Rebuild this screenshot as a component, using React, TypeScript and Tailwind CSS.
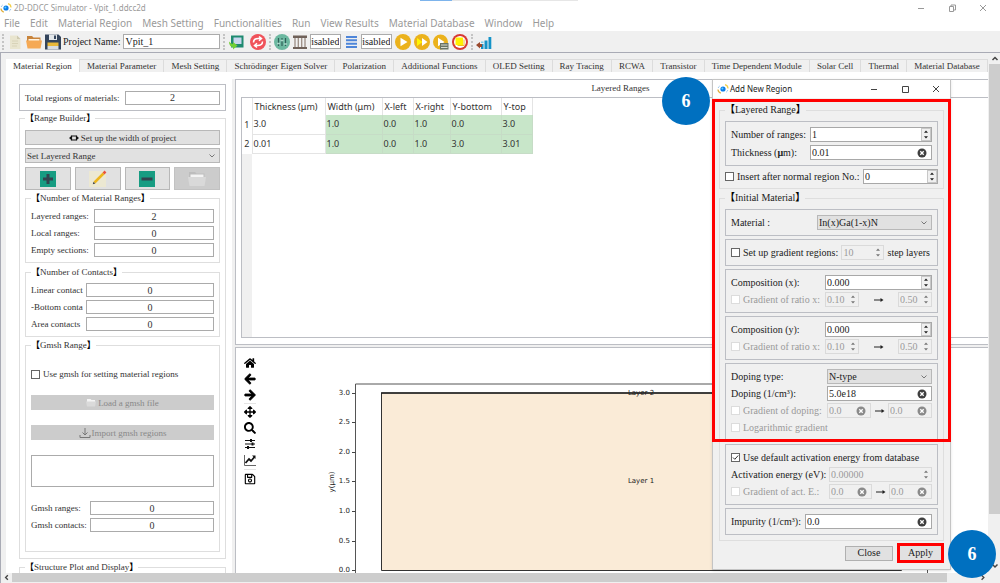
import { useId } from 'react';
import type { ReactNode } from 'react';
import { FaArrowLeft, FaArrowRight, FaArrowsAlt, FaHome, FaRegSave, FaSearch } from 'react-icons/fa';

const MENUS = ['File', 'Edit', 'Material Region', 'Mesh Setting', 'Functionalities', 'Run', 'View Results', 'Material Database', 'Window', 'Help'];

const TABS = [
    'Material Region',
    'Material Parameter',
    'Mesh Setting',
    'Schrödinger Eigen Solver',
    'Polarization',
    'Additional Functions',
    'OLED Setting',
    'Ray Tracing',
    'RCWA',
    'Transistor',
    'Time Dependent Module',
    'Solar Cell',
    'Thermal',
    'Material Database',
];

const COLUMNS = ['Thickness (μm)', 'Width (μm)', 'X-left', 'X-right', 'Y-bottom', 'Y-top'];

const LAYERS = [
    ['3.0', '1.0', '0.0', '1.0', '0.0', '3.0'],
    ['0.01', '1.0', '0.0', '1.0', '3.0', '3.01'],
];

const Y_TICKS = [
    { label: '3.0', y: 393 },
    { label: '2.5', y: 422 },
    { label: '2.0', y: 452 },
    { label: '1.5', y: 481 },
    { label: '1.0', y: 511 },
    { label: '0.5', y: 541 },
    { label: '0.0', y: 570 },
];

function AppLogo() {
    return (
        <svg viewBox="0 0 12 12" className="h-3 w-3 shrink-0">
            <circle cx="6" cy="6" r="2.6" fill="#0a7be8" />
            <circle cx="5.4" cy="5.4" r="1" fill="#5fd0ff" />
            <path d="M1 6.500c0 1.800 1 3 2.800 3.600" fill="none" stroke="#e0b040" strokeWidth="1.200" />
            <path d="M1.200 5c.3-1 .8-1.600 1.500-2" fill="none" stroke="#9cc8ee" strokeWidth="1" />
            <path d="M8 1.600c1.800.5 3 2 3 4" fill="none" stroke="#f3cf45" strokeWidth="1.200" />
            <path d="M10.800 7c-.3 1-.8 1.700-1.600 2.200" fill="none" stroke="#9cc8ee" strokeWidth="1" />
        </svg>
    );
}

function WindowButtons({ restore = false }: { restore?: boolean }) {
    return (
        <div className={['flex gap-[21px]', restore ? 'text-[#999]' : 'text-[#444]'].join(' ')}>
            <button aria-label="Minimize">
                <svg viewBox="0 0 10 10" className="h-[10px] w-[10px]" fill="none" stroke="currentColor">
                    <path d="M2 5.500h6" />
                </svg>
            </button>
            <button aria-label="Maximize">
                <svg viewBox="0 0 10 10" className="h-[10px] w-[10px]" fill="none" stroke="currentColor">
                    {restore ? <path d="M2.500 3.500h4v5h-4zM4 3.500v-1.500h4.500v5h-2" /> : <path d="M2.500 2.500h6v6h-6z" />}
                </svg>
            </button>
            <button aria-label="Close window">
                <svg viewBox="0 0 10 10" className="h-[10px] w-[10px]" fill="none" stroke="currentColor">
                    <path d="M2 2l6 6M8 2l-6 6" />
                </svg>
            </button>
        </div>
    );
}

function Handle() {
    return <span className="h-4 w-0 shrink-0 border-l-2 border-dotted border-[#c4c4c4]" />;
}

function Group({ title, className = '', children }: { title: string; className?: string; children?: ReactNode }) {
    return (
        <fieldset className={['min-w-0 border border-[#dedede] px-[5px]', className].join(' ')}>
            <legend className="h-3 leading-3">
                <b className="text-black">【</b>
                {title}
                <b className="text-black">】</b>
            </legend>
            {children}
        </fieldset>
    );
}

function Chevron() {
    return (
        <svg viewBox="0 0 8 8" className="pointer-events-none absolute top-1 right-1 h-2 w-2" fill="none" stroke="#777">
            <path d="M1.500 2.500l2.500 2.500l2.500-2.500" />
        </svg>
    );
}

function Combo({ label, value, className = '' }: { label: string; value: string; className?: string }) {
    return (
        <div className={['relative h-[15px]', className].join(' ')}>
            <select aria-label={label} className="block h-full w-full appearance-none border border-[#b8b8b8] bg-[#e1e1e1] px-px leading-3">
                <option>{value}</option>
            </select>
            <Chevron />
        </div>
    );
}

interface FieldProps {
    id?: string;
    label?: string;
    value: string;
    kind?: 'spin' | 'clear';
    disabled?: boolean;
    className?: string;
}

// Text box with either stepper arrows or a clear button at its right end
function Field({ id, label, value, kind = 'spin', disabled = false, className = '' }: FieldProps) {
    return (
        <div
            className={[
                'flex h-[15px] min-w-0 items-center border',
                disabled ? 'border-[#dadada] bg-[#f0f0f0] text-[#9a9a9a]' : 'border-[#a8a8a8] bg-white',
                className,
            ].join(' ')}
        >
            <input id={id} aria-label={label} defaultValue={value} disabled={disabled} className="h-full w-0 min-w-0 flex-1 pl-px" />
            {kind === 'spin' ? (
                <button
                    aria-label="Step value"
                    disabled={disabled}
                    className={['flex h-full w-[10px] shrink-0 items-center justify-center', disabled ? '' : 'border border-[#c8c8c8] bg-[#f0f0f0]'].join(' ')}
                >
                    <svg viewBox="0 0 6 11" className="h-[11px] w-[6px]" fill={disabled ? '#777' : '#222'}>
                        <path d="M3 1.500l2 2.200h-4zM3 9.500l2-2.200h-4z" />
                    </svg>
                </button>
            ) : (
                <button aria-label="Clear" disabled={disabled} className="mr-1 shrink-0">
                    <svg viewBox="0 0 10 10" className="h-[10px] w-[10px]">
                        <circle cx="5" cy="5" r="4.500" fill={disabled ? '#8a8a8a' : '#3f3f3f'} />
                        <path d="M3.300 3.300l3.400 3.400M6.700 3.300l-3.400 3.400" stroke="#fff" strokeWidth="1.300" />
                    </svg>
                </button>
            )}
        </div>
    );
}

function Check({ label, checked = false, disabled = false }: { label: string; checked?: boolean; disabled?: boolean }) {
    return (
        <label className={['flex shrink-0 items-center gap-[3px] whitespace-nowrap', disabled ? 'text-[#9a9a9a]' : ''].join(' ')}>
            <span className="relative flex">
                <input
                    type="checkbox"
                    defaultChecked={checked}
                    disabled={disabled}
                    className="peer h-[9px] w-[9px] appearance-none border border-[#666] bg-white disabled:border-[#dcdcdc]"
                />
                <svg
                    viewBox="0 0 9 9"
                    className="pointer-events-none absolute inset-0 hidden h-[9px] w-[9px] peer-checked:block"
                    fill="none"
                    stroke="#333"
                >
                    <path d="M2 4.500l1.800 1.800l3.400-3.800" />
                </svg>
            </span>
            {label}
        </label>
    );
}

function Frame({ children }: { children: ReactNode }) {
    return <div className="flex flex-col gap-[2px] border border-[#bcbec4] p-[5px]">{children}</div>;
}

function Row({ children }: { children: ReactNode }) {
    return <div className="flex h-[15px] items-center justify-between">{children}</div>;
}

function LabelledField({ label, ...field }: Omit<FieldProps, 'label'> & { label: ReactNode }) {
    const id = useId();
    return (
        <Row>
            <label htmlFor={id}>{label}</label>
            <Field id={id} {...field} />
        </Row>
    );
}

function Counter({ label, value, className }: { label: string; value: string; className: string }) {
    const id = useId();
    return (
        <div className="flex h-[14px] items-center justify-between">
            <label htmlFor={id} className="min-w-0 flex-1 overflow-hidden whitespace-nowrap">
                {label}
            </label>
            <input
                id={id}
                readOnly
                value={value}
                className={['h-full border border-[#ababab] bg-white text-center text-[10px]', className].join(' ')}
            />
        </div>
    );
}

function Arrow() {
    return (
        <svg viewBox="0 0 10 6" className="h-[6px] w-[10px] shrink-0" stroke="#222" fill="#222">
            <path d="M0 3h7" fill="none" />
            <path d="M6.500 1l3 2l-3 2z" stroke="none" />
        </svg>
    );
}

function ToolButton({ label, children }: { label: string; children: ReactNode }) {
    return (
        <button aria-label={label} className="shrink-0">
            <svg viewBox="0 0 16 16" className="h-4 w-4">
                {children}
            </svg>
        </button>
    );
}

function Toolbar() {
    return (
        <div className="flex h-[21px] shrink-0 items-center gap-[3px] bg-[#f0f0f0] pl-[2px] text-[10px]">
            <Handle />
            <ToolButton label="New project">
                <path d="M3 1.500h7l3.500 3.500v10h-10.500z" fill="#e9e5cf" />
                <path d="M10 1.500v3.500h3.500z" fill="#cfcab0" />
                <path d="M5 7h6M5 9.500h6M5 12h5" stroke="#d8d3b8" />
            </ToolButton>
            <ToolButton label="Open project">
                <path d="M1 2h5l1.500 1.500h7v4h-13.500z" fill="#c8843c" />
                <path d="M2.500 5h11v3h-11z" fill="#fff3e0" />
                <path d="M0 6.500h16l-1.500 8h-13z" fill="#f5a955" />
            </ToolButton>
            <ToolButton label="Save project">
                <path d="M0 .5h13.500l2.500 2.500v12.500h-16z" fill="#34455c" />
                <path d="M4 .5h8v5.500h-8z" fill="#e3e7ea" />
                <path d="M9 1.500h2v3.500h-2z" fill="#34455c" />
                <path d="M2.500 8.500h11v3.500h-11z" fill="#e9b93a" />
                <path d="M2.500 12h11v3.500h-11z" fill="#d9dde0" />
            </ToolButton>
            <label htmlFor="project-name" className="-ml-[1px] whitespace-nowrap">
                Project Name:
            </label>
            <input id="project-name" defaultValue="Vpit_1" className="h-[15px] w-[97px] border border-[#ababab] bg-white pl-[1px]" />
            <Handle />
            <ToolButton label="Import structure">
                <path d="M3 1.500h12.500v12h-12.500z" fill="#1f8a70" />
                <path d="M5.500 3.500h8v6.500h-8z" fill="#c9d6ee" />
                <path d="M1 7.500c0 3.500 1.500 5.500 4 5.500v2.500l4.500-4l-4.500-3.500v2c-1.500 0-2.500-1-4-2.500z" fill="#72cf35" />
            </ToolButton>
            <div className="w-0" />
            <ToolButton label="Reload">
                <circle cx="8" cy="8" r="8" fill="#f0525a" />
                <g fill="none" stroke="#fff" strokeWidth="1.500">
                    <path d="M3.500 8.500c0-3 2.500-4 5-4h2M9 2.500l2.500 2l-2.500 2.200" />
                    <path d="M12.500 7.500c0 3-2.500 4-5 4h-2M7 13.500l-2.500-2l2.500-2.200" />
                </g>
            </ToolButton>
            <Handle />
            <div className="flex items-center gap-[2px]">
                <ToolButton label="Solver settings">
                    <circle cx="8" cy="8" r="8" fill="#6cb8a0" />
                    <path d="M4.500 4v8M8 4v8M11.500 4v8" stroke="#2f5f58" strokeWidth="1.200" />
                    <path d="M3 9.500h3M6.500 6.500h3M10 10h3" stroke="#a9d8c9" strokeWidth="1.500" />
                </ToolButton>
                <ToolButton label="Layers">
                    <path d="M1 1.500h14v2.500h-14zM1 13h14v2h-14z" fill="#6f6159" />
                    <path d="M3 4v9M6.300 4v9M9.700 4v9M13 4v9" stroke="#9b8d84" strokeWidth="1.300" />
                </ToolButton>
                <input aria-label="Layer mode" dir="rtl" readOnly value="Disabled" className="h-[15px] w-[31px] border border-[#ababab] bg-white pr-[1px]" />
                <ToolButton label="Mesh rows">
                    <path d="M3 3h11M3 6.300h11M3 9.700h11M3 13h11" stroke="#4f86d9" strokeWidth="2" />
                </ToolButton>
                <input aria-label="Row mode" dir="rtl" readOnly value="Disabled" className="h-[15px] w-[31px] border border-[#ababab] bg-white pr-[1px]" />
            </div>
            <ToolButton label="Run">
                <circle cx="8" cy="8" r="8" fill="#ebb21c" />
                <path d="M5.500 3.800l7 4.200l-7 4.200z" fill="#fff" />
            </ToolButton>
            <ToolButton label="Run all">
                <circle cx="8" cy="8" r="8" fill="#ebb21c" />
                <path d="M3 4l5.500 4l-5.500 4z" fill="#fff700" />
                <path d="M8 4l5.500 4l-5.500 4z" fill="#fff" />
            </ToolButton>
            <ToolButton label="Run on server">
                <circle cx="7.500" cy="8" r="7.500" fill="#ebb21c" />
                <path d="M5 3.800l6.500 4.200l-6.500 4.200z" fill="#fff" />
                <path d="M7 9h8.500v6.500h-8.500z" fill="#6a7466" />
                <path d="M8 11h6.500M8 13.500h6.500" stroke="#d8dccf" />
            </ToolButton>
            <ToolButton label="Stop">
                <circle cx="8" cy="8" r="8" fill="#d83a34" />
                <circle cx="8" cy="8" r="6" fill="#fff" />
                <path d="M3.500 3.500h7.500v7.500h-7.500z" fill="#fff000" />
                <path d="M5.500 11.500h6.500v-6" fill="none" stroke="#f0c020" />
            </ToolButton>
            <Handle />
            <ToolButton label="Charts">
                <path d="M5 10h2.500v5h-2.500zM8.500 6.500h3v8.500h-3zM12.500 3h2.800v12h-2.800z" fill="#1493c8" />
                <path d="M5 7.500h2.500v1.500h-2.500z" fill="#7ccdea" />
                <path d="M0 11l4-3v2h2v3h-2v1.500z" fill="#9b4a2e" />
            </ToolButton>
        </div>
    );
}

function RegionSidebar() {
    return (
        <aside className="flex w-[226px] shrink-0 flex-col overflow-hidden pt-3 pr-[6px] pl-[13px] text-[9px] leading-3 text-[#333]">
            <div className="mb-[1px] flex h-[27px] shrink-0 items-center justify-between border border-[#bcbec4] px-[5px]">
                <label htmlFor="total-regions">Total regions of materials:</label>
                <input id="total-regions" readOnly value="2" className="h-[14px] w-[95px] border border-[#ababab] bg-white text-center text-[10px]" />
            </div>

            <Group title="Range Builder" className="shrink-0 pt-[6px] pb-[6px]">
                <button className="flex h-[15px] w-full items-center justify-center gap-[2px] border border-[#b8b8b8] bg-[#e1e1e1]">
                    <svg viewBox="0 0 10 8" className="h-2 w-[10px]" fill="#111">
                        <path d="M0 4l3-2.500v5zM10 4l-3-2.500v5z" />
                        <path d="M2.500 2h5v4h-5z" fill="none" stroke="#111" strokeWidth="1.200" />
                    </svg>
                    Set up the width of project
                </button>
                <Combo label="Range type" value="Set Layered Range" className="mt-[3px]" />
                <div className="mt-1 grid grid-cols-4 gap-1">
                    <button aria-label="Add range" className="flex h-[23px] items-center justify-center border border-[#b8b8b8] bg-[#e1e1e1]">
                        <svg viewBox="0 0 16 16" className="h-4 w-4">
                            <path d="M0 0h16v16h-16z" fill="#179c82" />
                            <path d="M8 3v10M3 8h10" stroke="#33434e" strokeWidth="3" />
                        </svg>
                    </button>
                    <button aria-label="Edit range" className="flex h-[23px] items-center justify-center border border-[#b8b8b8] bg-[#e1e1e1]">
                        <svg viewBox="0 0 18 18" className="h-[18px] w-[18px]">
                            <path d="M0 1h17v16h-17z" fill="#ece8d2" />
                            <path d="M5.500 12.500l9-9" stroke="#edb51c" strokeWidth="2.500" />
                            <path d="M14.500 3.500l2-2" stroke="#e8523f" strokeWidth="2.500" />
                            <path d="M3.800 14.200l2.500-.8l-1.700-1.700z" fill="#444" />
                        </svg>
                    </button>
                    <button aria-label="Remove range" className="flex h-[23px] items-center justify-center border border-[#b8b8b8] bg-[#e1e1e1]">
                        <svg viewBox="0 0 16 16" className="h-4 w-4">
                            <path d="M0 0h16v16h-16z" fill="#179c82" />
                            <path d="M2.500 8h11" stroke="#33434e" strokeWidth="3" />
                        </svg>
                    </button>
                    <button aria-label="Open range" disabled className="flex h-[23px] items-center justify-center border border-[#c2c2c2] bg-[#cccccc]">
                        <svg viewBox="0 0 18 16" className="h-4 w-[18px]">
                            <path d="M1 1h6l1.500 1.500h8v4h-15.500z" fill="#bdbdbd" />
                            <path d="M2.500 3.500h13v3h-13z" fill="#f4f4f4" />
                            <path d="M0 6h18l-1.500 9h-15z" fill="#d9d9d9" />
                        </svg>
                    </button>
                </div>

                <Group title="Number of Material Ranges" className="mt-[2px] pt-[5px] pb-[5px]">
                    <div className="flex flex-col gap-[3px]">
                        <Counter label="Layered ranges:" value="2" className="w-[120px]" />
                        <Counter label="Local ranges:" value="0" className="w-[120px]" />
                        <Counter label="Empty sections:" value="0" className="w-[120px]" />
                    </div>
                </Group>

                <Group title="Number of Contacts" className="mt-[3px] pt-[5px] pb-[5px]">
                    <div className="flex flex-col gap-[3px]">
                        <Counter label="Linear contact" value="0" className="w-[128px]" />
                        <Counter label="-Bottom conta" value="0" className="w-[128px]" />
                        <Counter label="Area contacts" value="0" className="w-[128px]" />
                    </div>
                </Group>

                <Group title="Gmsh Range" className="mt-[2px] pt-[17px] pb-[19px]">
                    <Check label="Use gmsh for setting material regions" />
                    <button disabled className="mt-[15px] flex h-[15px] w-full items-center justify-center gap-[2px] bg-[#cccccc] text-[#888]">
                        <svg viewBox="0 0 10 9" className="h-[9px] w-[10px]">
                            <path d="M1 1h3.500l1 1h3.500v2h-8z" fill="#f4f4f4" />
                            <path d="M0 3.500h10l-1 5h-8z" fill="#dadada" />
                        </svg>
                        Load a gmsh file
                    </button>
                    <button disabled className="mt-[15px] flex h-[15px] w-full items-center justify-center gap-[1px] bg-[#cccccc] text-[#888]">
                        <svg viewBox="0 0 12 12" className="h-3 w-3" fill="none" stroke="#777">
                            <path d="M6 1v7M3.500 5.500l2.500 2.500l2.500-2.500M1 8v2.500h10v-2.500" />
                        </svg>
                        Import gmsh regions
                    </button>
                    <textarea aria-label="Gmsh regions" className="mt-[15px] block h-8 w-full resize-none border border-[#ababab] bg-white" />
                    <div className="mt-[14px] flex flex-col gap-[3px]">
                        <Counter label="Gmsh ranges:" value="0" className="w-[124px]" />
                        <Counter label="Gmsh contacts:" value="0" className="w-[124px]" />
                    </div>
                </Group>
            </Group>

            <Group title="Structure Plot and Display" className="mt-[2px] h-10 shrink-0" />
        </aside>
    );
}

function LayeredRanges() {
    return (
        <section className="flex h-[266px] shrink-0 flex-col border-y border-l border-[#bcbec4] bg-white pb-[6px] pl-[5px]">
            <h2 className="flex h-[17px] items-center justify-center pt-px pl-3 text-[9px] text-[#333]">Layered Ranges</h2>
            <div className="flex-1 border-y border-l border-[#bcbec4] bg-[linear-gradient(to_right,#f0f0f0_10px,#ffffff_10px)] font-['Noto_Sans','Open_Sans',sans-serif] text-[9px] leading-3">
                <table className="w-[290px] table-fixed border-collapse bg-white text-[#333]">
                    <colgroup>
                        <col className="w-[10px]" />
                        <col className="w-[73px]" />
                        <col className="w-[57px]" />
                        <col className="w-[31px]" />
                        <col className="w-[37px]" />
                        <col className="w-[51px]" />
                        <col className="w-[31px]" />
                    </colgroup>
                    <thead>
                        <tr className="h-[17px]">
                            <th className="border-r border-[#e4e4e4]" />
                            {COLUMNS.map((name) => (
                                <th key={name} className="border-r border-[#e4e4e4] p-0 pl-[2px] text-left font-normal whitespace-nowrap">
                                    {name}
                                </th>
                            ))}
                        </tr>
                    </thead>
                    <tbody>
                        {LAYERS.map((cells, row) => (
                            <tr key={row} className="h-[19px]">
                                <th className="border-r border-[#e4e4e4] p-0 font-normal">{row + 1}</th>
                                {cells.map((cell, index) => (
                                    <td
                                        key={COLUMNS[index]}
                                        className={[
                                            'border-r border-b p-0 pl-px',
                                            index > 0 ? 'border-[#c6dcc6] bg-[#c8e6c9]' : 'border-[#e4e4e4] bg-white',
                                        ].join(' ')}
                                    >
                                        {cell}
                                    </td>
                                ))}
                            </tr>
                        ))}
                    </tbody>
                </table>
            </div>
        </section>
    );
}

function StructurePlot() {
    return (
        <section className="mt-[2px] flex min-h-0 flex-1 overflow-hidden border-t border-l border-[#bcbec4] bg-white">
            <div className="flex w-[28px] shrink-0 flex-col items-center gap-1 pt-[9px] text-[12px] text-black">
                <button aria-label="Home">
                    <FaHome />
                </button>
                <button aria-label="Back">
                    <FaArrowLeft className="stroke-current stroke-[40]" />
                </button>
                <button aria-label="Forward">
                    <FaArrowRight className="stroke-current stroke-[40]" />
                </button>
                <hr className="-my-[2px] w-3 border-t border-[#e4e4e4]" />
                <button aria-label="Pan">
                    <FaArrowsAlt />
                </button>
                <button aria-label="Zoom">
                    <FaSearch />
                </button>
                <button aria-label="Subplots">
                    <svg viewBox="0 0 12 12" className="h-3 w-3" stroke="#111">
                        <path d="M1 2.500h10M1 6h10M1 9.500h10" />
                        <path d="M7 1v3M8.500 4.500v3M4 8v3" strokeWidth="2" />
                    </svg>
                </button>
                <button aria-label="Edit axes">
                    <svg viewBox="0 0 12 12" className="h-3 w-3" fill="none" stroke="#111">
                        <path d="M.5 1v10.500h11.500" stroke="#666" />
                        <path d="M1.500 9l3.500-4l2 2l3.500-4" strokeWidth="1.800" />
                        <path d="M8 1.500h3.500v3.500z" fill="#111" stroke="none" />
                    </svg>
                </button>
                <hr className="-my-px w-3 border-t border-[#e4e4e4]" />
                <button aria-label="Save figure">
                    <FaRegSave />
                </button>
            </div>
            <svg viewBox="264 348 724 226" className="h-[226px] w-[724px] shrink-0 font-['DejaVu_Sans',sans-serif] text-[7px]" fill="#222">
                <path d="M355.500 600v-216h572v216" fill="none" stroke="#555" />
                <path d="M381.500 393h520v177.500h-520z" fill="#faebd7" stroke="#333" />
                <path d="M381 393h521" stroke="#222" strokeWidth="1.600" />
                {Y_TICKS.map(({ label, y }) => (
                    <g key={label}>
                        <path d={`M352 ${y + 0.5}h3.500`} stroke="#444" />
                        <text x="350" y={y + 2} textAnchor="end">
                            {label}
                        </text>
                    </g>
                ))}
                <text transform="translate(334 482) rotate(-90)" textAnchor="middle">
                    y(μm)
                </text>
                <text x="641" y="395" textAnchor="middle">
                    Layer 2
                </text>
                <text x="641" y="483" textAnchor="middle">
                    Layer 1
                </text>
            </svg>
        </section>
    );
}

function AddRegionDialog() {
    return (
        <div
            role="dialog"
            aria-label="Add New Region"
            className="absolute top-[79px] right-[49px] w-[239px] border border-[#c4c4c4] bg-[#f0f0f0] pb-[6px] text-[10px] leading-3 shadow-sm"
        >
            <div className="flex h-[18px] items-center bg-white pr-[9px] pl-1">
                <AppLogo />
                <h2 className="ml-px flex-1 font-['Noto_Sans','Open_Sans',sans-serif] text-[8px] text-[#222]">Add New Region</h2>
                <WindowButtons />
            </div>

            <div className="px-[6px] pt-[6px]">
                <Group title="Layered Range" className="pt-[5px] pb-1">
                    <div className="flex flex-col gap-[3px] border border-[#bcbec4] p-[5px]">
                        <LabelledField label="Number of ranges:" value="1" className="w-[122px]" />
                        <LabelledField
                            label={
                                <>
                                    Thickness (<b>μ</b>m):
                                </>
                            }
                            value="0.01"
                            kind="clear"
                            className="w-[122px]"
                        />
                    </div>
                    <div className="mt-[3px]">
                        <Row>
                            <Check label="Insert after normal region No.:" />
                            <Field label="Region number" value="0" className="w-[75px]" />
                        </Row>
                    </div>
                </Group>

                <Group title="Initial Material" className="mt-[3px] pt-[5px] pb-[5px]">
                    <div className="flex flex-col gap-[3px]">
                        <Frame>
                            <Row>
                                <span>Material :</span>
                                <Combo label="Material" value="In(x)Ga(1-x)N" className="w-[115px]" />
                            </Row>
                        </Frame>
                        <Frame>
                            <Row>
                                <Check label="Set up gradient regions:" />
                                <Field label="Step layers" value="10" disabled className="w-[43px]" />
                                <span className="pr-[2px]">step layers</span>
                            </Row>
                        </Frame>
                        {['x', 'y'].map((axis) => (
                            <Frame key={axis}>
                                <LabelledField label={`Composition (${axis}):`} value="0.000" className="w-[107px]" />
                                <Row>
                                    <Check label="Gradient of ratio x:" disabled />
                                    <div className="flex w-[107px] items-center justify-between">
                                        <Field label="Ratio from" value="0.10" disabled className="w-[34px]" />
                                        <Arrow />
                                        <Field label="Ratio to" value="0.50" disabled className="w-[34px]" />
                                    </div>
                                </Row>
                            </Frame>
                        ))}
                        <Frame>
                            <Row>
                                <span>Doping type:</span>
                                <Combo label="Doping type" value="N-type" className="w-[105px]" />
                            </Row>
                            <LabelledField label="Doping (1/cm³):" value="5.0e18" kind="clear" className="w-[105px]" />
                            <Row>
                                <Check label="Gradient of doping:" disabled />
                                <div className="flex w-[105px] items-center justify-between">
                                    <Field label="Doping from" value="0.0" kind="clear" disabled className="w-[44px]" />
                                    <Arrow />
                                    <Field label="Doping to" value="0.0" kind="clear" disabled className="w-[44px]" />
                                </div>
                            </Row>
                            <Row>
                                <Check label="Logarithmic gradient" disabled />
                            </Row>
                        </Frame>
                        <Frame>
                            <Row>
                                <Check label="Use default activation energy from database" checked />
                            </Row>
                            <LabelledField label="Activation energy (eV):" value="0.00000" disabled className="w-[103px]" />
                            <Row>
                                <Check label="Gradient of act. E.:" disabled />
                                <div className="flex w-[103px] items-center justify-between">
                                    <Field label="Energy from" value="0.0" kind="clear" disabled className="w-[43px]" />
                                    <Arrow />
                                    <Field label="Energy to" value="0.0" kind="clear" disabled className="w-[43px]" />
                                </div>
                            </Row>
                        </Frame>
                        <Frame>
                            <LabelledField label="Impurity (1/cm³):" value="0.0" kind="clear" className="w-[127px]" />
                        </Frame>
                    </div>
                </Group>

                <div className="mt-[2px] flex items-center justify-end gap-1">
                    <button className="h-[15px] w-12 border border-[#b0b0b0] bg-[#e1e1e1]">Close</button>
                    <button className="h-[20px] w-[47px] border-[3px] border-[#ff0000] bg-[#e1e1e1]">Apply</button>
                </div>
            </div>

            {/* Highlight around the settings of this step */}
            <div className="pointer-events-none absolute -inset-x-px top-[19px] h-[343px] border-[3px] border-[#ff0000]" />
        </div>
    );
}

function StepBadge({ step, className }: { step: number; className: string }) {
    return (
        <div
            className={[
                'absolute flex h-12 w-12 items-center justify-center rounded-full bg-[#0070c0] text-[18px] font-bold text-white',
                className,
            ].join(' ')}
        >
            {step}
        </div>
    );
}

export default function App() {
    return (
        <div className="relative flex h-screen flex-col overflow-hidden bg-white font-['Liberation_Serif','Noto_Sans_CJK_TC',serif] text-[#222]">
            <header className="flex h-[31px] shrink-0 flex-col font-['Noto_Sans','Open_Sans',sans-serif] text-[#9a9a9a]">
                <div className="flex h-[15px] items-center pr-3">
                    <AppLogo />
                    <h1 className="ml-[2px] flex-1 text-[8px]">2D-DDCC Simulator - Vpit_1.ddcc2d</h1>
                    <WindowButtons restore />
                </div>
                <nav className="flex h-4 items-center gap-[10px] pl-1 text-[10px]">
                    {MENUS.map((name) => (
                        <button key={name}>{name}</button>
                    ))}
                </nav>
            </header>
            <div className="absolute top-0 left-[42%] flex h-px w-[158px]">
                <span className="w-8 bg-[#7db4ec]" />
                <span className="flex-1 bg-[#e6e6e6]" />
            </div>

            <Toolbar />

            <div className="flex min-h-0 flex-1 border-t border-l border-[#a9abb5] bg-[#f0f0f0]">
                <div className="flex min-w-0 flex-1 flex-col">
                    <div className="flex min-h-0 flex-1 flex-col pt-[6px] pl-[5px]">
                        <div role="tablist" className="flex h-[13px] shrink-0 text-[9px] leading-3 text-[#333]">
                            {TABS.map((name, index) => (
                                <button
                                    key={name}
                                    role="tab"
                                    aria-selected={index === 0}
                                    className={['grow border-r border-[#dcdcdc] whitespace-nowrap', index === 0 ? 'bg-white' : 'border-t'].join(' ')}
                                >
                                    {name}
                                </button>
                            ))}
                        </div>
                        <div className="flex min-h-0 flex-1 bg-white">
                            <RegionSidebar />
                            <div className="flex min-w-0 flex-1 flex-col pt-[7px]">
                                <div className="flex min-h-0 flex-1 flex-col bg-[#f0f0f0] pl-[3px]">
                                    <LayeredRanges />
                                    <StructurePlot />
                                </div>
                            </div>
                        </div>
                    </div>
                    <div className="flex h-[10px] shrink-0 items-center pb-px">
                        <svg viewBox="0 0 10 10" className="h-[9px] w-[11px]" fill="none" stroke="#444" strokeWidth="1.500">
                            <path d="M6.500 2.500l-2.500 2.500l2.500 2.500" />
                        </svg>
                        <div className="h-full flex-1 bg-[#cdcdcd]" />
                        <div className="w-[30px]" />
                        <svg viewBox="0 0 10 10" className="h-[9px] w-[11px]" fill="none" stroke="#444" strokeWidth="1.500">
                            <path d="M4 2.500l2.500 2.500l-2.500 2.500" />
                        </svg>
                    </div>
                </div>
                <div className="flex w-3 shrink-0 flex-col items-center pb-3 pl-px">
                    <svg viewBox="0 0 10 10" className="h-[11px] w-[10px]" fill="none" stroke="#444" strokeWidth="1.500">
                        <path d="M2.500 6.500l2.500-2.500l2.500 2.500" />
                    </svg>
                    <div className="w-full flex-1 bg-[#cdcdcd]" />
                    <div className="h-[46px]" />
                    <svg viewBox="0 0 10 10" className="h-[11px] w-[10px]" fill="none" stroke="#444" strokeWidth="1.500">
                        <path d="M2.500 4l2.500 2.500l2.500-2.500" />
                    </svg>
                </div>
            </div>

            <AddRegionDialog />
            <StepBadge step={6} className="top-[77px] right-[290px]" />
            <StepBadge step={6} className="top-[530px] right-1" />
        </div>
    );
}
